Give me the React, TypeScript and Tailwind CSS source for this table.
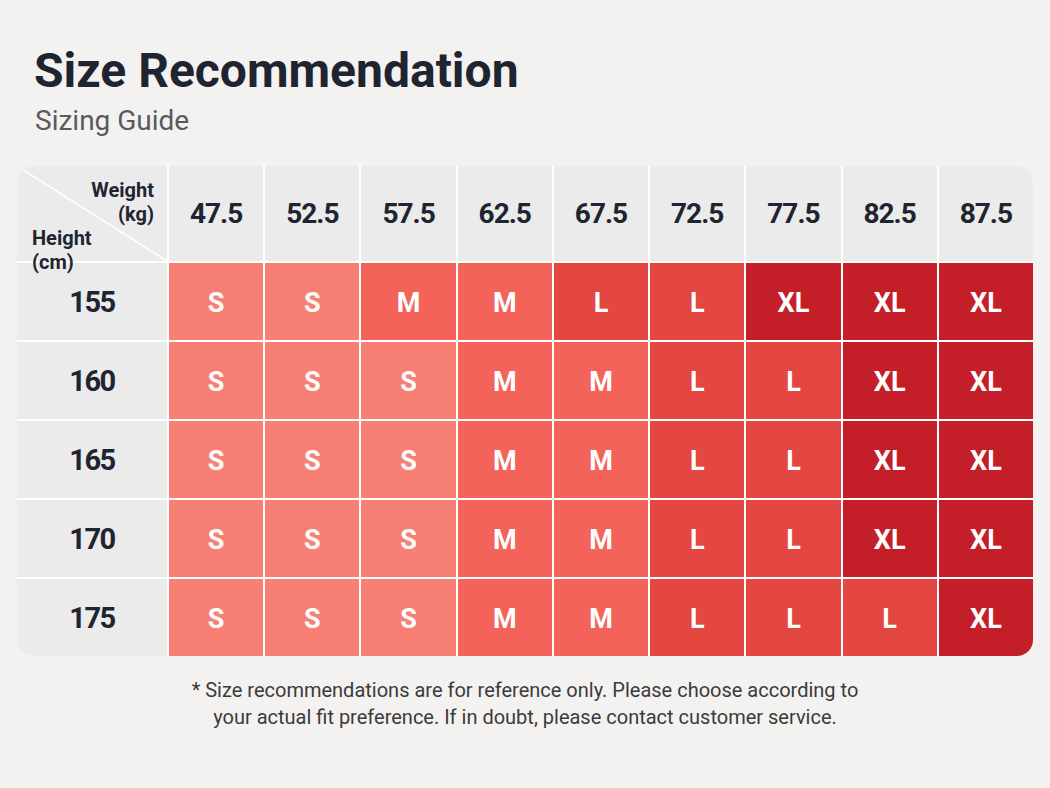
const weights = ["47.5", "52.5", "57.5", "62.5", "67.5", "72.5", "77.5", "82.5", "87.5"];

const rows: { height: string; sizes: string[] }[] = [
  { height: "155", sizes: ["S", "S", "M", "M", "L", "L", "XL", "XL", "XL"] },
  { height: "160", sizes: ["S", "S", "S", "M", "M", "L", "L", "XL", "XL"] },
  { height: "165", sizes: ["S", "S", "S", "M", "M", "L", "L", "XL", "XL"] },
  { height: "170", sizes: ["S", "S", "S", "M", "M", "L", "L", "XL", "XL"] },
  { height: "175", sizes: ["S", "S", "S", "M", "M", "L", "L", "L", "XL"] },
];

const sizeBg: Record<string, string> = {
  S: "bg-[#f87f74]",
  M: "bg-[#f3635a]",
  L: "bg-[#e44642]",
  XL: "bg-[#c41f28]",
};

function CornerCell() {
  return (
    <div className="relative bg-[#ebebeb] flex flex-col justify-between pt-[12px] pb-[4px] pl-[15px] pr-[13px] font-bold text-[20px] text-[#1e2530]">
      <svg className="absolute inset-0 w-full h-full" preserveAspectRatio="none" viewBox="0 0 100 100">
        <line x1="0" y1="0" x2="100" y2="100" stroke="white" strokeWidth="1.5" vectorEffect="non-scaling-stroke" />
      </svg>
      <div className="relative text-right leading-[24px]">
        <div>Weight</div>
        <div>(kg)</div>
      </div>
      <div className="relative text-left leading-[24px]">
        <div>Height</div>
        <div>(cm)</div>
      </div>
    </div>
  );
}

export default function App() {
  return (
    <div className="w-[1050px] h-[788px] bg-[#f3f2f0] px-[17px] pt-[47px] font-['Roboto',sans-serif]">
      <h1 className="pl-[17px] text-[48px] leading-none font-bold text-[#1e2530]">
        Size Recommendation
      </h1>
      <p className="pl-[18px] mt-[12px] text-[28px] leading-none text-[#5a5a5e]">Sizing Guide</p>

      <div className="mt-[31px] grid grid-cols-[150px_repeat(9,minmax(0,1fr))] grid-rows-[95px_repeat(5,77px)] gap-[2px] bg-white rounded-[16px] overflow-hidden">
        <CornerCell />
        {weights.map((w) => (
          <div
            key={w}
            className="bg-[#ebebeb] flex items-center justify-center text-[28px] font-bold text-[#1e2530] tracking-[-1px]"
          >
            {w}
          </div>
        ))}
        {rows.map((r) => (
          <>
            <div
              key={r.height}
              className="bg-[#ebebeb] flex items-center justify-center pt-[3px] text-[29px] font-bold text-[#1e2530] tracking-[-1.5px]"
            >
              {r.height}
            </div>
            {r.sizes.map((s, i) => (
              <div
                key={r.height + i}
                className={`${sizeBg[s]} flex items-center justify-center pt-[3px] text-[27px] font-bold text-white`}
              >
                {s}
              </div>
            ))}
          </>
        ))}
      </div>

      <p className="mt-[21px] text-center text-[20px] leading-[27px] text-[#3b3b3b]">
        * Size recommendations are for reference only. Please choose according to
        <br />
        your actual fit preference. If in doubt, please contact customer service.
      </p>
    </div>
  );
}
